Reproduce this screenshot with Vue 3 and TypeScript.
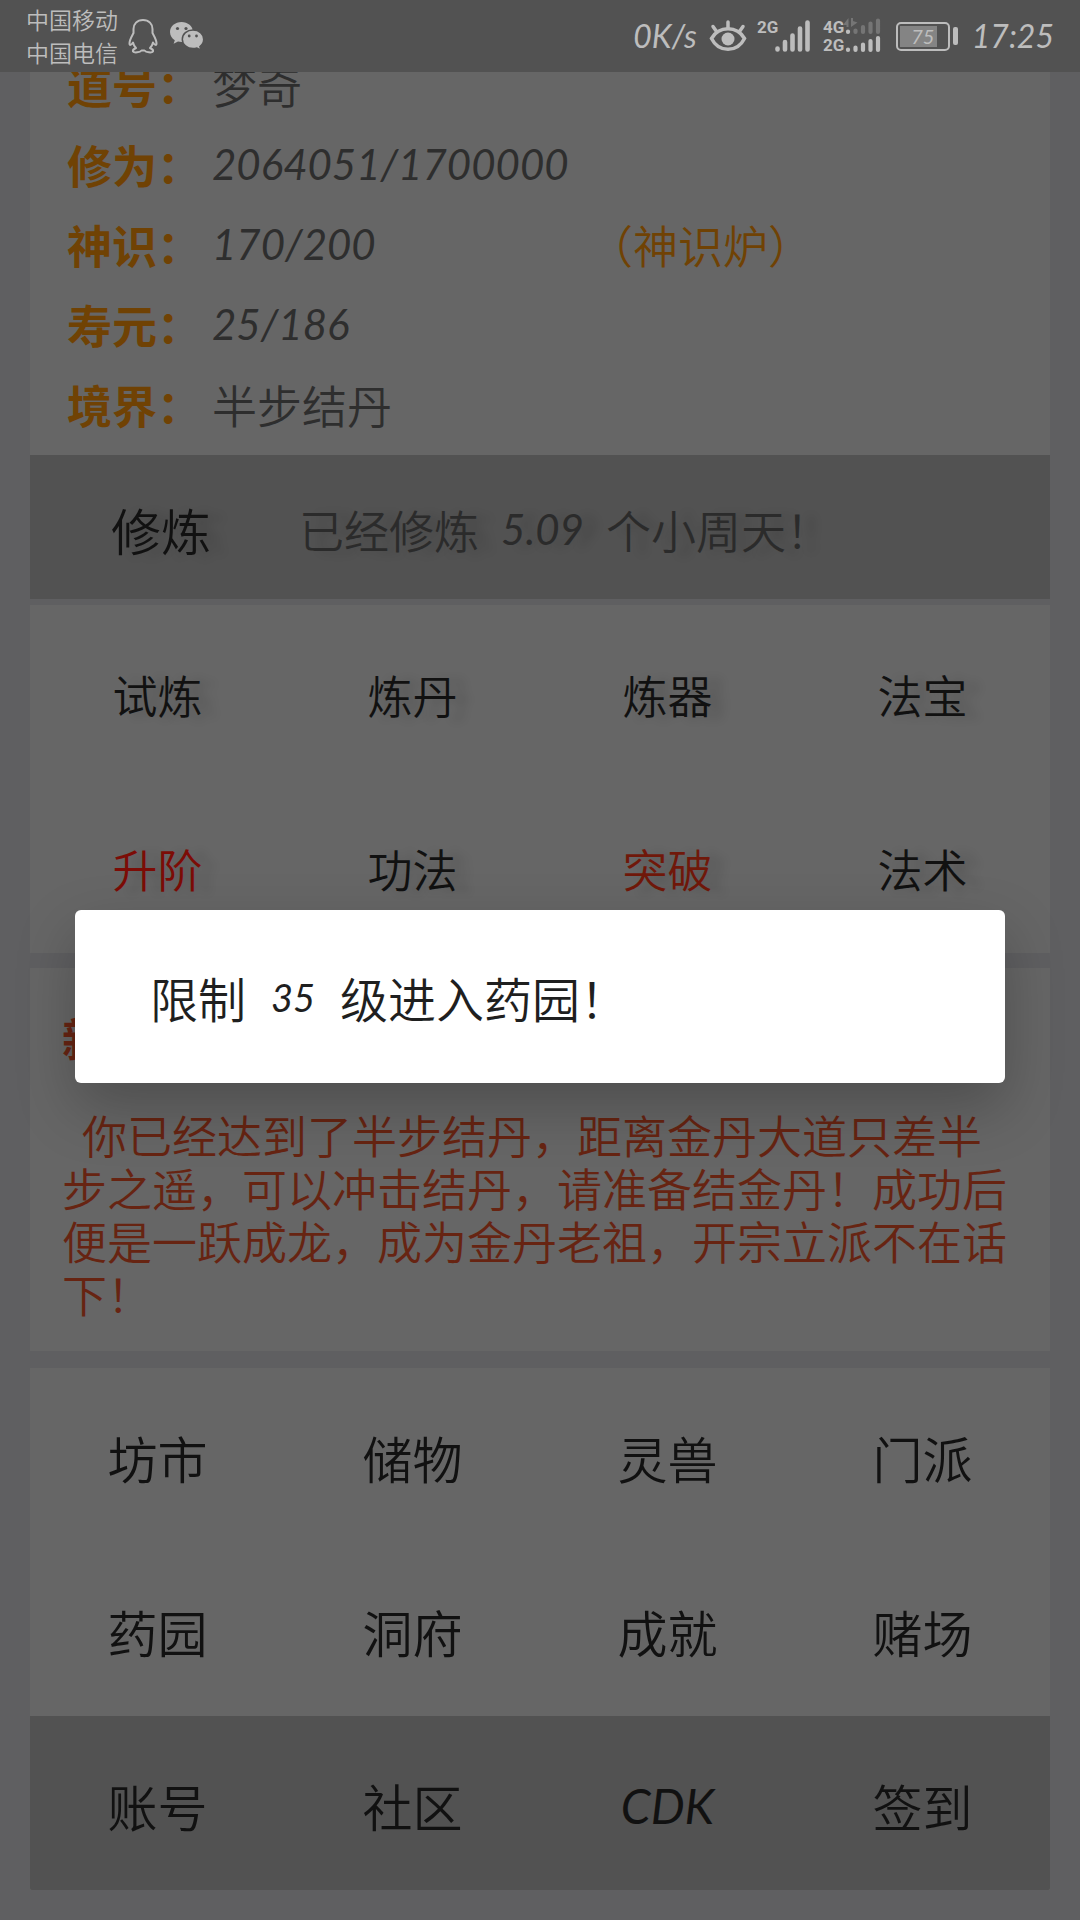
<script setup lang="ts">
interface Stat {
  label: string
  value: string
  numeric?: boolean
  link?: string
}

interface Action {
  text: string
  tone?: 'red' | 'rust'
  latin?: boolean
}

const stats: Stat[] = [
  { label: '道号：', value: '梦奇' },
  { label: '修为：', value: '2064051/1700000', numeric: true },
  { label: '神识：', value: '170/200', numeric: true, link: '（神识炉）' },
  { label: '寿元：', value: '25/186', numeric: true },
  { label: '境界：', value: '半步结丹' },
]

const skills: Action[] = [
  { text: '试炼' },
  { text: '炼丹' },
  { text: '炼器' },
  { text: '法宝' },
  { text: '升阶', tone: 'red' },
  { text: '功法' },
  { text: '突破', tone: 'rust' },
  { text: '法术' },
]

const places: Action[] = [
  { text: '坊市' },
  { text: '储物' },
  { text: '灵兽' },
  { text: '门派' },
  { text: '药园' },
  { text: '洞府' },
  { text: '成就' },
  { text: '赌场' },
]

const tools: Action[] = [
  { text: '账号' },
  { text: '社区' },
  { text: 'CDK', latin: true },
  { text: '签到' },
]
</script>

<template>
  <div class="page">
    <header class="status">
      <div class="carriers">
        <span>中国移动</span>
        <span>中国电信</span>
      </div>
      <svg class="qq" width="30" height="36" viewBox="0 0 30 36" fill="none" stroke="#bdbdbd" stroke-width="2" stroke-linejoin="round" aria-hidden="true">
        <path d="M15 2C9 2 5.500 6 5.500 11V15C4 18 1.500 21.500 1.500 25.500C1.500 27.500 3 27.500 5 24.500C5.500 27 6.500 28.500 8 30C5.500 31 4.500 32 5 33.500C6 35 12 34.500 13.500 32.500H16.500C18 34.500 24 35 25 33.500C25.500 32 24.500 31 22 30C23.500 28.500 24.500 27 25 24.500C27 27.500 28.500 27.500 28.500 25.500C28.500 21.500 26 18 24.500 15V11C24.500 6 21 2 15 2Z" />
      </svg>
      <svg class="wechat" width="34" height="30" viewBox="0 0 34 30" aria-hidden="true">
        <path fill="#bdbdbd" d="M11.500 1C5.200 1 0 5.200 0 11C0 14.500 2 17.500 4.800 19.300L3.600 22.800L8 20.600C9.200 20.900 10.300 21 11.500 21C17.800 21 23 16.800 23 11C23 5.200 17.800 1 11.500 1Z" />
        <path fill="#bdbdbd" stroke="#525252" stroke-width="1.500" d="M23 9C17 9 12.300 13 12.300 18.300C12.300 23.500 17 27.600 23 27.600C24.400 27.600 25.700 27.400 26.900 27L31 29.200L29.900 25.600C32.200 23.900 33.700 21.300 33.700 18.300C33.700 13 29 9 23 9Z" />
        <g fill="#525252">
          <circle cx="7.500" cy="7.500" r="1.600" />
          <circle cx="16" cy="7.500" r="1.600" />
          <circle cx="19.200" cy="15" r="1.400" />
          <circle cx="26.500" cy="15" r="1.400" />
        </g>
      </svg>

      <span class="spacer"></span>

      <span class="speed latin">0K/s</span>
      <svg class="eye" width="38" height="34" viewBox="0 0 38 34" fill="none" stroke="#bdbdbd" stroke-width="3.500" stroke-linecap="round" aria-hidden="true">
        <path d="M2.500 19.500C6 13.500 12 9.800 19 9.800C26 9.800 32 13.500 35.500 19.500C32 26.500 26 30.300 19 30.300C12 30.300 6 26.500 2.500 19.500Z" />
        <path d="M19 9V3M7.500 12.500L4 7.500M30.500 12.500L34 7.500" />
        <circle cx="19" cy="20" r="6.500" fill="#bdbdbd" stroke="none" />
      </svg>
      <svg class="sim" width="54" height="36" viewBox="0 0 54 36" aria-label="2G">
        <text class="net" x="0" y="15">2G</text>
        <g stroke="#bdbdbd" stroke-width="4.600" stroke-linecap="round">
          <path d="M20.500 30.500V31.500M28 24V31.500M35.500 17.500V31.500M43 10.500V31.500M50.500 4.500V31.500" />
        </g>
      </svg>
      <svg class="sim second" width="58" height="36" viewBox="0 0 58 36" aria-label="4G 2G">
        <text class="net" x="0" y="15">4G</text>
        <text class="net" x="0" y="33">2G</text>
        <g fill="none" stroke-width="4.200" stroke-linecap="round">
          <path stroke="#bdbdbd" d="M25 13.500V14M25 31.500V32M32.500 29.500V32M40 26.500V32M47.500 23V32M55 20V32" />
          <path stroke="#757575" d="M32.500 12.500V14M40 9V14M47.500 5.500V14M55 2.500V14" />
        </g>
        <path fill="#757575" d="M20 7L25.500 0V9H23.500V7ZM28 0V9L34.500 4.500L30 3V0Z" />
      </svg>
      <div class="battery">
        <div class="cell"><span class="level"></span><span class="latin percent">75</span></div>
        <span class="nub"></span>
      </div>
      <time class="clock latin">17:25</time>
    </header>

    <main class="content">
      <section class="card profile">
        <dl class="stats">
          <div v-for="s in stats" :key="s.label" class="stat">
            <dt>{{ s.label }}</dt>
            <dd :class="{ latin: s.numeric }">{{ s.value }}</dd>
            <dd v-if="s.link" class="extra"><a href="#">{{ s.link }}</a></dd>
          </div>
        </dl>
        <div class="train">
          <button type="button" class="train-btn">修炼</button>
          <p class="train-info">已经修炼<span class="latin figure">5.09</span>个小周天！</p>
        </div>
      </section>

      <section class="card grid skills">
        <button v-for="a in skills" :key="a.text" type="button" :class="a.tone">{{ a.text }}</button>
      </section>

      <section class="card notice">
        <h2>新</h2>
        <p>你已经达到了半步结丹，距离金丹大道只差半步之遥，可以冲击结丹，请准备结金丹！成功后便是一跃成龙，成为金丹老祖，开宗立派不在话下！</p>
      </section>

      <nav class="card">
        <div class="grid places">
          <button v-for="a in places" :key="a.text" type="button">{{ a.text }}</button>
        </div>
        <div class="grid places tools">
          <button v-for="a in tools" :key="a.text" type="button" :class="{ latin: a.latin }">{{ a.text }}</button>
        </div>
      </nav>
    </main>

    <div class="overlay">
      <div class="message" role="alertdialog" aria-labelledby="message-text">
        <p id="message-text">限制<span class="latin level-req">35</span>级进入药园！</p>
      </div>
    </div>
  </div>
</template>

<style>
body {
  margin: 0;
  background: #5f5f61;
}
</style>

<style scoped>
.page {
  position: relative;
  min-height: 100vh;
  background: #5f5f61;
  font-family: "Noto Sans CJK SC", sans-serif;
  font-weight: 350;
  font-size: 45px;
  color: #111;
}

p,
h2,
dl,
dd {
  margin: 0;
}

button {
  border: 0;
  padding: 0;
  background: none;
  font: inherit;
  color: inherit;
  text-shadow: inherit;
}

.latin {
  font-family: "Lato", sans-serif;
  font-weight: 400;
  font-style: italic;
}

/* status bar */
.status {
  position: relative;
  z-index: 1;
  display: flex;
  align-items: center;
  box-sizing: border-box;
  height: 72px;
  padding: 0 26px;
  background: #525252;
  color: #bdbdbd;
}

.carriers {
  display: flex;
  flex-direction: column;
  font-size: 23px;
  line-height: 33px;
}

.qq {
  margin-left: 10px;
}

.wechat {
  margin-left: 12px;
}

.spacer {
  flex: 1;
}

.speed {
  flex: none;
  font-size: 32px;
  line-height: 48px;
}

.eye {
  margin-left: 12px;
}

.sim {
  margin-left: 10px;
}

.second {
  margin-left: 12px;
}

.net {
  font: 700 17px "Liberation Sans Narrow", "Roboto", sans-serif;
  fill: #bdbdbd;
}

.battery {
  display: flex;
  align-items: center;
  gap: 3px;
  margin-left: 15px;
}

.cell {
  position: relative;
  display: flex;
  align-items: center;
  justify-content: center;
  box-sizing: border-box;
  width: 54px;
  height: 29px;
  border: 2px solid #bdbdbd;
  border-radius: 5px;
}

.level {
  position: absolute;
  top: 2px;
  bottom: 2px;
  left: 2px;
  width: 37px;
  background: #848484;
}

.percent {
  position: relative;
  font-size: 20px;
  line-height: 24px;
}

.nub {
  width: 5px;
  height: 18px;
  border-radius: 2px;
  background: #bdbdbd;
}

.clock {
  margin-left: 14px;
  font-size: 32px;
  line-height: 48px;
}

/* cards */
.content {
  padding: 0 30px 30px;
}

.card {
  background: #666;
}

.stats {
  margin-top: -28px;
  padding-bottom: 11px;
}

.profile {
  overflow: hidden;
}

.stat {
  display: flex;
  align-items: center;
  height: 80px;
  padding-left: 37px;
}

.stat dt {
  width: 145px;
  font-weight: 700;
  color: #704204;
}

.stat dd {
  color: #2e2e2e;
  white-space: nowrap;
}

.stat dd.latin {
  font-size: 42px;
}

.stat dd.latin:nth-child(2) {
  width: 376px;
}

.stat .extra a {
  color: #704204;
  text-decoration: none;
}

.train {
  display: flex;
  align-items: center;
  box-sizing: border-box;
  height: 144px;
  padding: 4px 0 0 81px;
  background: #525252;
  text-shadow: 14px 2px 10px rgba(0, 0, 0, 0.14);
}

.train-btn {
  font-size: 50px;
}

.train-info {
  display: flex;
  align-items: center;
  margin-left: 88px;
  color: #2b2b2b;
}

.figure {
  margin: 0 22px;
  font-size: 42px;
}

.grid {
  display: grid;
  grid-template-columns: repeat(4, 1fr);
  grid-auto-rows: 174px;
}

.grid button {
  padding-top: 4px;
}

.skills {
  margin-top: 6px;
  text-shadow: 14px 2px 10px rgba(0, 0, 0, 0.14);
}

.red {
  color: #7c0c06;
}

.rust {
  color: #70180a;
}

.notice {
  margin: 15px 0 17px;
  padding: 43px 32px 31px;
  color: #672412;
}

.notice h2 {
  margin-bottom: 43px;
  font-size: 45px;
  font-weight: 700;
  line-height: 54px;
}

.notice p {
  line-height: 53px;
  text-indent: 20px;
}

.places {
  font-size: 50px;
}

.tools {
  border-radius: 0 0 2px 2px;
  background: #525252;
}

.tools .latin {
  font-size: 48px;
}

/* message box */
.overlay {
  position: absolute;
  z-index: 2;
  top: 72px;
  right: 0;
  bottom: 0;
  left: 0;
  display: flex;
  align-items: center;
  justify-content: center;
  padding: 0 75px;
}

.message {
  flex: 1;
  padding: 51px 75px 50px;
  border-radius: 6px;
  background: #fff;
  box-shadow: 0 24px 60px rgba(0, 0, 0, 0.24);
  color: #1f1f1f;
  font-size: 48px;
  line-height: 72px;
}

.message p {
  display: flex;
  align-items: center;
}

.level-req {
  margin: 0 25px;
  font-size: 38px;
}
</style>
